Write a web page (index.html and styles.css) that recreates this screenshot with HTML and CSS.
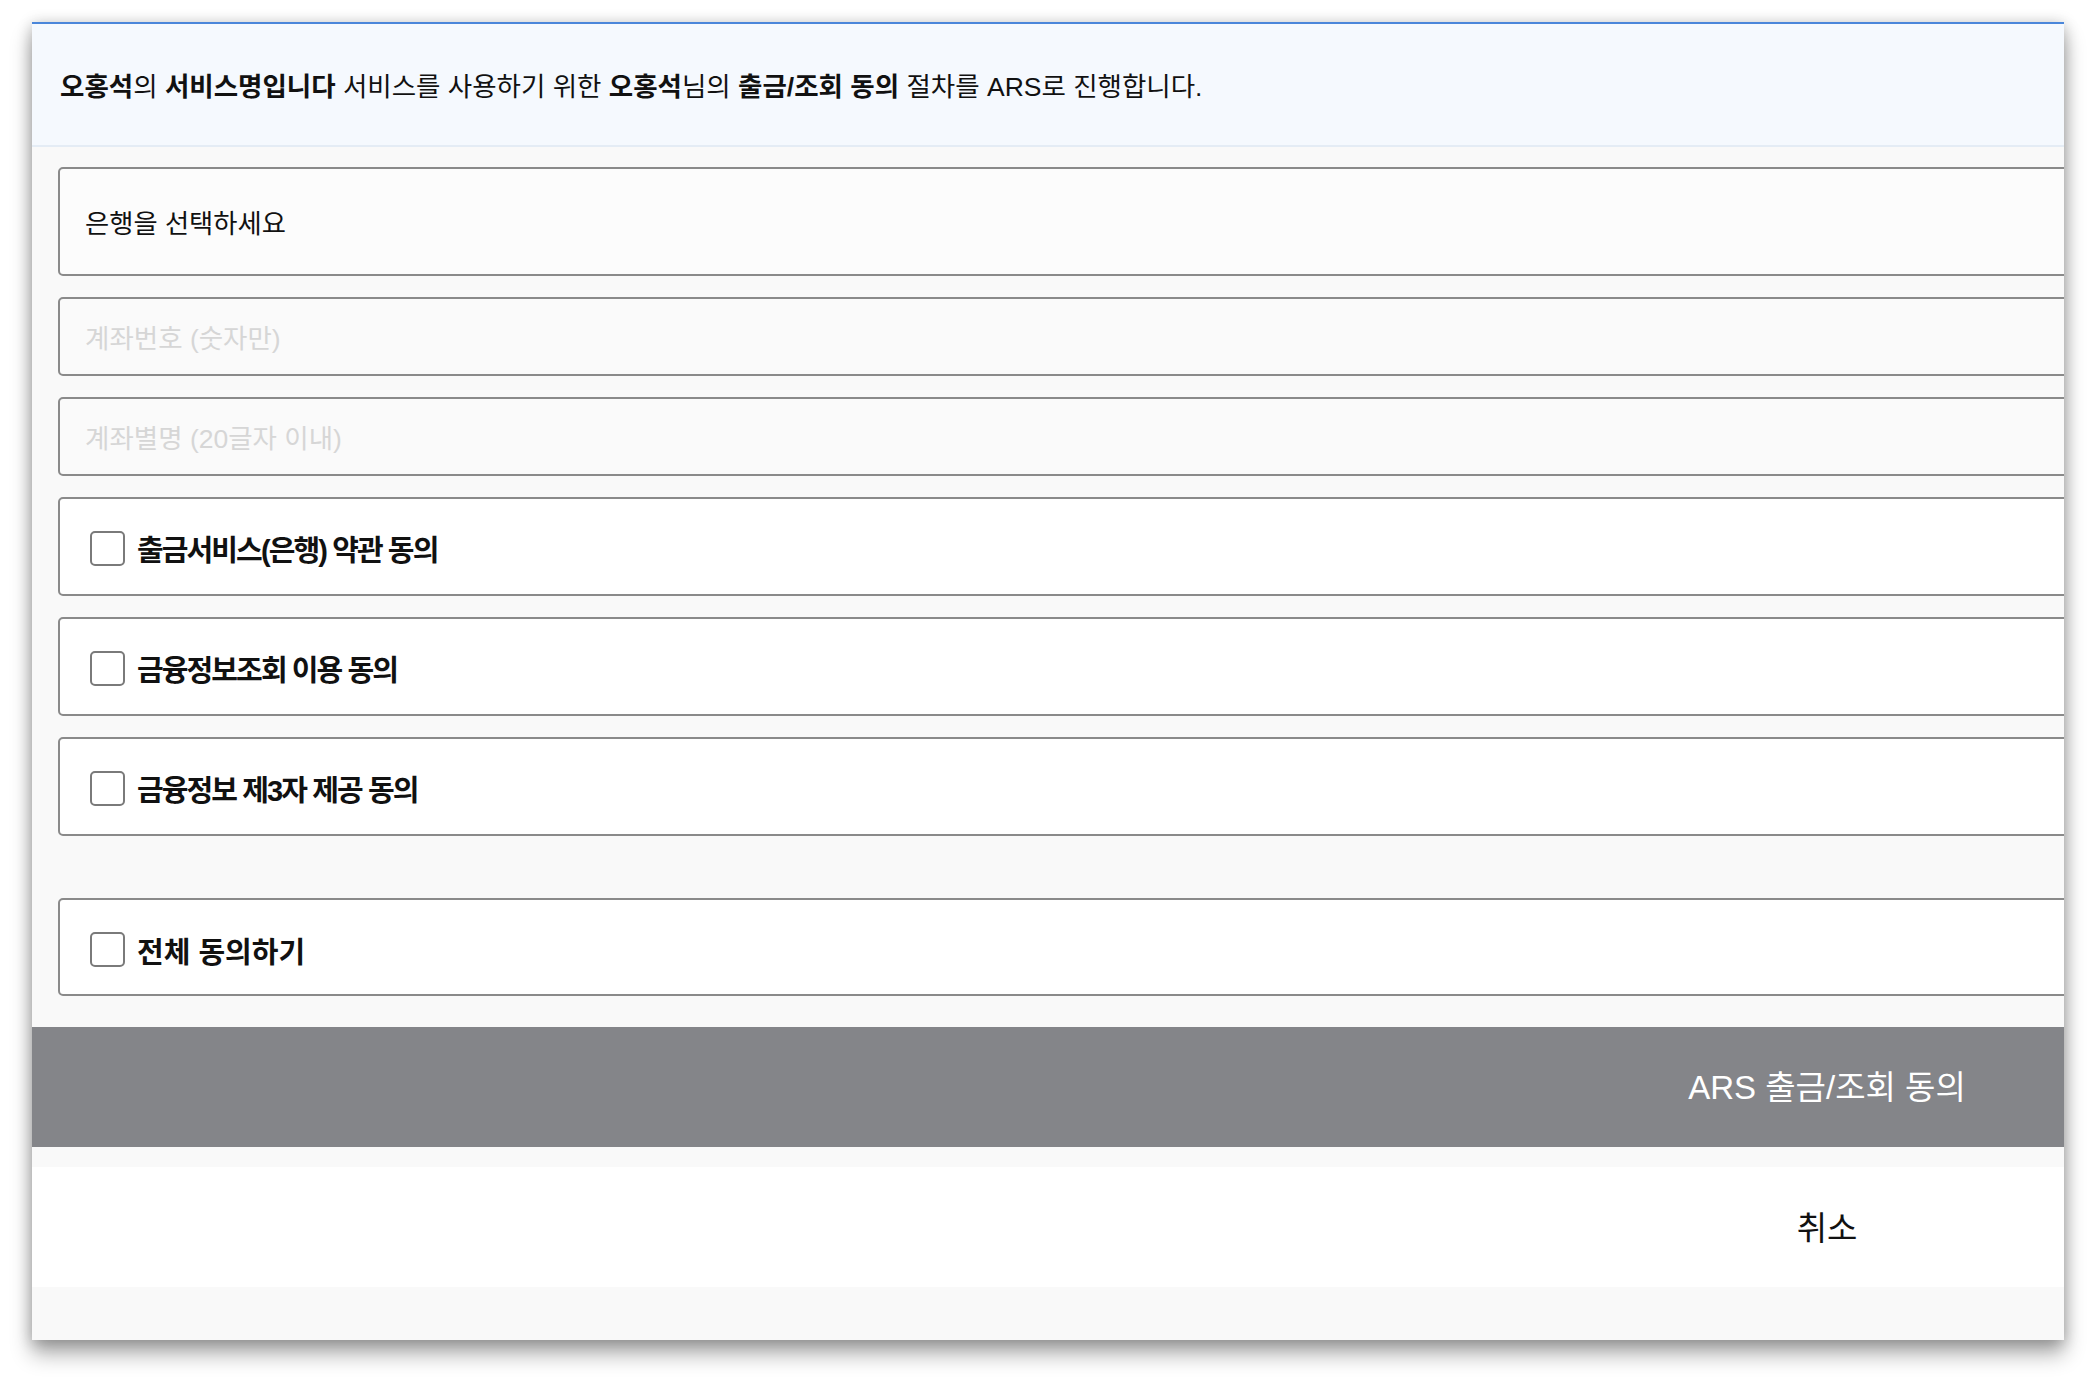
FILE: index.html
```html
<!DOCTYPE html>
<html lang="ko">
<head>
<meta charset="utf-8">
<title>ARS 출금/조회 동의</title>
<link rel="stylesheet" href="styles.css">
</head>
<body>
<div class="window">
  <div class="sheet">
    <header class="notice">
      <p><b>오홍석</b>의 <b>서비스명입니다</b> 서비스를 사용하기 위한 <b>오홍석</b>님의 <b>출금/조회 동의</b> 절차를 ARS로 진행합니다.</p>
    </header>
    <form class="form">
      <div class="field select-field">은행을 선택하세요</div>
      <div class="field input-field"><span class="placeholder">계좌번호 (숫자만)</span></div>
      <div class="field input-field"><span class="placeholder">계좌별명 (20글자 이내)</span></div>
      <label class="check-row"><span class="box"></span><span class="label tight">출금서비스(은행) 약관 동의</span></label>
      <label class="check-row"><span class="box"></span><span class="label tight">금융정보조회 이용 동의</span></label>
      <label class="check-row"><span class="box"></span><span class="label tight">금융정보 제3자 제공 동의</span></label>
      <label class="check-row all"><span class="box"></span><span class="label">전체 동의하기</span></label>
    </form>
    <div class="btn primary">ARS 출금/조회 동의</div>
    <div class="btn cancel">취소</div>
  </div>
</div>
</body>
</html>
```
FILE: styles.css
```css
html, body {
  margin: 0;
  padding: 0;
  background: #ffffff;
}
body {
  font-family: "Liberation Sans", "Noto Sans CJK KR", sans-serif;
  color: #111;
  padding-top: 22px;
  padding-left: 32px;
  height: 1381px;
  box-sizing: border-box;
  overflow: hidden;
}
.window {
  width: 2032px;
  height: 1318px;
  overflow: hidden;
  background: #f9f9f9;
  border-top: 2px solid #4a86da;
  box-sizing: border-box;
  box-shadow: 0 14px 20px rgba(0,0,0,0.32), 0 2px 14px rgba(0,0,0,0.24);
}
.sheet {
  width: 3590px;
}
.notice {
  height: 123px;
  background: #f5f9fe;
  border-bottom: 2px solid #e4ecf5;
  display: flex;
  align-items: center;
  padding-left: 28px;
  padding-bottom: 1px;
  box-sizing: border-box;
}
.notice p {
  margin: 0;
  font-size: 26.5px;
  color: #111;
}
.notice b { font-weight: 700; }
.form {
  padding: 20px 26px 31px 26px;
  display: flex;
  flex-direction: column;
}
.field, .check-row {
  border: 2px solid #8a8a8a;
  border-radius: 5px;
  box-sizing: border-box;
  display: flex;
  align-items: center;
  margin-bottom: 21px;
}
.select-field {
  height: 109px;
  background: #fcfcfc;
  padding-left: 25px;
  padding-bottom: 1px;
  font-size: 26.3px;
  color: #111;
}
.input-field {
  height: 79px;
  background: #fafafa;
  padding-left: 25px;
  font-size: 26.5px;
}
.placeholder { color: #d6d6d6; }
.check-row {
  height: 99px;
  background: #ffffff;
  padding-left: 30px;
  padding-top: 3px;
}
.check-row.all {
  margin-top: 41px;
  height: 98px;
  margin-bottom: 0;
  padding-top: 5px;
}
.box {
  width: 35px;
  height: 35px;
  border: 2px solid #7a7a7a;
  border-radius: 5px;
  box-sizing: border-box;
  background: #fff;
  margin-right: 12px;
  flex: none;
}
.label {
  font-size: 29px;
  font-weight: 700;
  color: #111;
}
.label.tight { letter-spacing: -1.9px; }
.btn {
  height: 120px;
  display: flex;
  align-items: center;
  justify-content: center;
  box-sizing: border-box;
}
.primary {
  background: #848589;
  color: #fff;
  font-size: 33px;
  padding-bottom: 5px;
}
.cancel {
  margin-top: 20px;
  background: #fff;
  color: #111;
  font-size: 33px;
  padding-bottom: 3px;
}
```
